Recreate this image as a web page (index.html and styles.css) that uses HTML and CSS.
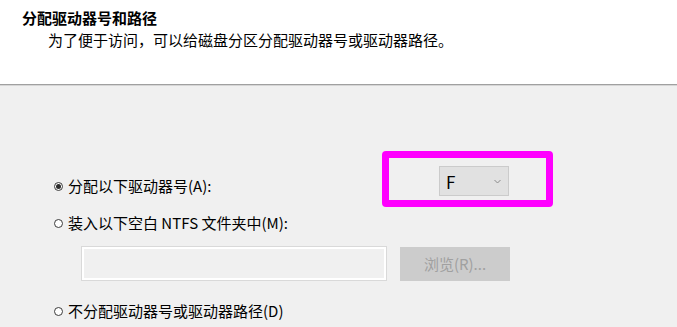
FILE: index.html
```html
<!DOCTYPE html>
<html lang="zh-CN">
<head>
<meta charset="utf-8">
<title>分配驱动器号和路径</title>
<link rel="stylesheet" href="styles.css">
</head>
<body>
<div class="wizard">
  <header class="head">
    <div class="title">分配驱动器号和路径</div>
    <div class="subtitle">为了便于访问，可以给磁盘分区分配驱动器号或驱动器路径。</div>
  </header>
  <main class="content">
    <div class="row row-assign">
      <label class="opt opt-first"><span class="radio checked"></span><span>分配以下驱动器号(A):</span></label>
      <div class="highlight">
        <div class="combo">
          <span class="combo-val">F</span>
          <svg class="chev" width="7" height="5" viewBox="0 0 7 5"><path d="M0.5 1 L3.5 4 L6.5 1" fill="none" stroke="#8a8a8a" stroke-width="1"/></svg>
        </div>
      </div>
    </div>
    <label class="opt opt-mount"><span class="radio"></span><span>装入以下空白 NTFS 文件夹中(M):</span></label>
    <div class="row row-path">
      <div class="pathbox"></div>
      <div class="browse">浏览(R)...</div>
    </div>
    <label class="opt opt-none"><span class="radio"></span><span>不分配驱动器号或驱动器路径(D)</span></label>
  </main>
</div>
</body>
</html>
```

FILE: styles.css
```css
html, body {
  margin: 0;
  padding: 0;
}
body {
  width: 677px;
  height: 327px;
  overflow: hidden;
  background: #f0f0f0;
  font-family: "Noto Sans CJK SC", "Noto Sans", "Liberation Sans", sans-serif;
  font-size: 15px;
  color: #000;
}
.wizard {
  display: flex;
  flex-direction: column;
}
.head {
  height: 85px;
  background: #fff;
  border-bottom: 1px solid #a0a0a0;
  box-shadow: 0 1px 0 #d6d6d6;
  box-sizing: border-box;
  padding-top: 8px;
}
.title {
  font-weight: bold;
  line-height: 20px;
  padding-left: 22px;
}
.subtitle {
  line-height: 20px;
  margin-top: 2px;
  padding-left: 48px;
}
.content {
  display: flex;
  flex-direction: column;
  padding-top: 66px;
  padding-left: 54px;
}
.row {
  display: flex;
}
.row-assign {
  height: 56px;
  align-items: flex-start;
}
.opt {
  display: flex;
  align-items: center;
  line-height: 20px;
  height: 20px;
  gap: 5px;
}
.opt-first {
  margin-top: 25px;
}
.opt-mount {
  margin-top: 6px;
}
.opt-none {
  margin-top: 20px;
}
.radio {
  width: 9px;
  height: 9px;
  box-sizing: border-box;
  border: 1px solid #3c3c3c;
  border-radius: 50%;
  background: #fff;
  display: flex;
  align-items: center;
  justify-content: center;
  flex: none;
}
.radio.checked::after {
  content: "";
  width: 5px;
  height: 5px;
  border-radius: 50%;
  background: #2b2b2b;
}
.highlight {
  margin-left: auto;
  margin-right: 124px;
  width: 171px;
  height: 56px;
  box-sizing: border-box;
  border: 7px solid #ff00ff;
  border-radius: 4px;
  padding: 8px 0 0 50px;
}
.combo {
  width: 70px;
  height: 30px;
  box-sizing: border-box;
  background: #e1e1e1;
  border: 1px solid #cbcbcb;
  display: flex;
  align-items: center;
  padding: 0 7px 0 6px;
}
.combo-val {
  font-size: 17px;
  flex: 1;
}
.chev {
  display: block;
}
.row-path {
  margin-top: 13px;
  padding-left: 27px;
  align-items: flex-start;
  gap: 13px;
}
.pathbox {
  width: 306px;
  height: 35px;
  box-sizing: border-box;
  border: 1px solid #d9d9d9;
  box-shadow: inset 0 0 0 2px #fff;
  background: #f0f0f0;
}
.browse {
  width: 110px;
  height: 34px;
  margin-top: 1px;
  background: #cccccc;
  color: #a0a0a0;
  display: flex;
  align-items: center;
  justify-content: center;
  line-height: 20px;
}
```
